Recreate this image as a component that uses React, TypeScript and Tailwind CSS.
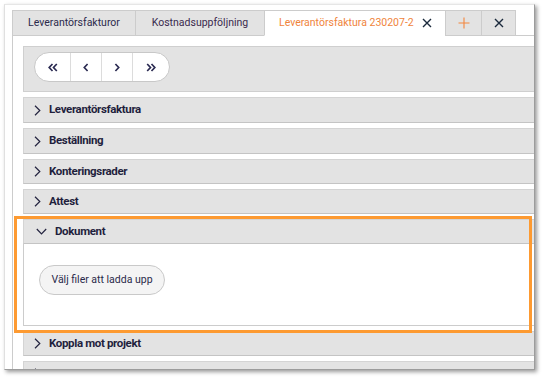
import React from "react";

function ChevronRight() {
  return (
    <svg width="7" height="11" viewBox="0 0 7 11" className="shrink-0">
      <path d="M1 0.8 L5.8 5.5 L1 10.2" fill="none" stroke="#23233f" strokeWidth="1.2" />
    </svg>
  );
}

function ChevronDown() {
  return (
    <svg width="11" height="7" viewBox="0 0 11 7" className="shrink-0">
      <path d="M0.8 1 L5.5 5.8 L10.2 1" fill="none" stroke="#23233f" strokeWidth="1.2" />
    </svg>
  );
}

function XIcon({ color = "#1b2a3c" }: { color?: string }) {
  return (
    <svg width="10" height="10" viewBox="0 0 10 10" className="shrink-0">
      <path d="M1 1 L9 9 M9 1 L1 9" fill="none" stroke={color} strokeWidth="1.4" />
    </svg>
  );
}

function PlusIcon() {
  return (
    <svg width="12" height="12" viewBox="0 0 12 12" className="shrink-0">
      <path d="M6 0.5 V11.5 M0.5 6 H11.5" fill="none" stroke="#f4873e" strokeWidth="1.1" />
    </svg>
  );
}

function NavIcon({ d, w }: { d: string; w: number }) {
  return (
    <svg width={w} height="9" viewBox={`0 0 ${w} 9`} className="shrink-0">
      <path d={d} fill="none" stroke="#2b2b52" strokeWidth="1.7" />
    </svg>
  );
}

function Header({
  title,
  hClass,
  open,
}: {
  title: string;
  hClass: string;
  open?: boolean;
}) {
  return (
    <div
      className={`flex items-center ${hClass} bg-[#e3e3e3] border border-[#d4d4d4] border-b-[#c4c4c4] ${
        open ? "pl-[12px] gap-[8px]" : "pl-[10px] gap-[8px]"
      }`}
    >
      {open ? <ChevronDown /> : <ChevronRight />}
      <span className="text-[11.5px] font-bold tracking-[-0.35px] text-[#1f1f3d] leading-none">
        {title}
      </span>
    </div>
  );
}

export default function App() {
  return (
    <div className="relative w-[544px] h-[379px] bg-white pl-[4px] pt-[4px] overflow-hidden font-['Roboto',sans-serif]">
      <div className="w-[531px] h-[366px] bg-white border-l border-t border-l-[#e0e0e0] border-t-[#e6e6e6] border-r border-b border-r-[#9c9c9c] border-b-[#9c9c9c] shadow-[2px_2px_4px_rgba(0,0,0,0.4)] overflow-hidden pl-[7px] pt-[5px]">
        {/* Tabs */}
        <div className="relative z-10 -mb-px flex h-[26px] text-[10.5px] leading-none">
          <div className="w-[124px] border border-[#cccccc] bg-[#e3e3e3] flex items-center justify-center text-[#2b2a4c]">
            Leverantörsfakturor
          </div>
          <div className="-ml-px w-[130px] border border-[#cccccc] bg-[#e3e3e3] flex items-center justify-center text-[#3a2a4e]">
            Kostnadsuppföljning
          </div>
          <div className="-ml-px w-[182px] border border-[#cccccc] border-b-white bg-white flex items-center pl-[14px] gap-[8px] text-[#f0843c]">
            <span>Leverantörsfaktura 230207-2</span>
            <XIcon />
          </div>
          <div className="-ml-px w-[37px] border border-[#cccccc] bg-[#e3e3e3] flex items-center justify-center">
            <PlusIcon />
          </div>
          <div className="-ml-px w-[35px] border border-[#cccccc] bg-[#e3e3e3] flex items-center justify-center">
            <XIcon />
          </div>
        </div>

        {/* Content */}
        <div className="w-[620px] h-[400px] border-l border-t border-[#cccccc] pl-[10px] pt-[10px]">
          {/* Nav toolbar */}
          <div className="h-[46px] border border-[#cfcfcf] bg-[#e3e3e3] pl-[10px] pt-[5px]">
            <div className="flex h-[30px] w-[136px] rounded-full border border-[#c8c8c8] bg-white overflow-hidden">
              <div className="w-[36px] flex items-center justify-center border-r border-[#dcdcdc]">
                <NavIcon w={10} d="M4.5 1 L1.2 4.5 L4.5 8 M8.8 1 L5.5 4.5 L8.8 8" />
              </div>
              <div className="w-[31px] flex items-center justify-center border-r border-[#dcdcdc]">
                <NavIcon w={6} d="M4.6 1 L1.3 4.5 L4.6 8" />
              </div>
              <div className="w-[31px] flex items-center justify-center border-r border-[#dcdcdc]">
                <NavIcon w={6} d="M1.4 1 L4.7 4.5 L1.4 8" />
              </div>
              <div className="w-[36px] flex items-center justify-center">
                <NavIcon w={10} d="M1.2 1 L4.5 4.5 L1.2 8 M5.5 1 L8.8 4.5 L5.5 8" />
              </div>
            </div>
          </div>

          {/* Accordion */}
          <div className="mt-[5px] flex flex-col gap-[5px]">
            <Header title="Leverantörsfaktura" hClass="h-[26px]" />
            <Header title="Beställning" hClass="h-[26px]" />
            <Header title="Konteringsrader" hClass="h-[25px]" />
            <Header title="Attest" hClass="h-[25px]" />
            <div className="flex flex-col">
              <Header title="Dokument" hClass="h-[25px]" open />
              <div className="h-[82px] bg-white border-l border-b border-[#cccccc] pl-[15px] pt-[21px]">
                <button className="h-[30px] w-[126px] rounded-full border border-[#c9c9c9] bg-[#f4f4f4] text-[10.5px] text-[#2a2a4a] leading-none flex items-center justify-center">
                  Välj filer att ladda upp
                </button>
              </div>
            </div>
            <Header title="Koppla mot projekt" hClass="h-[25px]" />
            <Header title="Vidarefakturering" hClass="h-[25px]" />
          </div>
        </div>
      </div>

      {/* Highlight annotation */}
      <div className="absolute left-[14px] top-[216px] w-[518px] h-[117px] border-[3px] border-[#fd9a31] pointer-events-none" />
    </div>
  );
}
